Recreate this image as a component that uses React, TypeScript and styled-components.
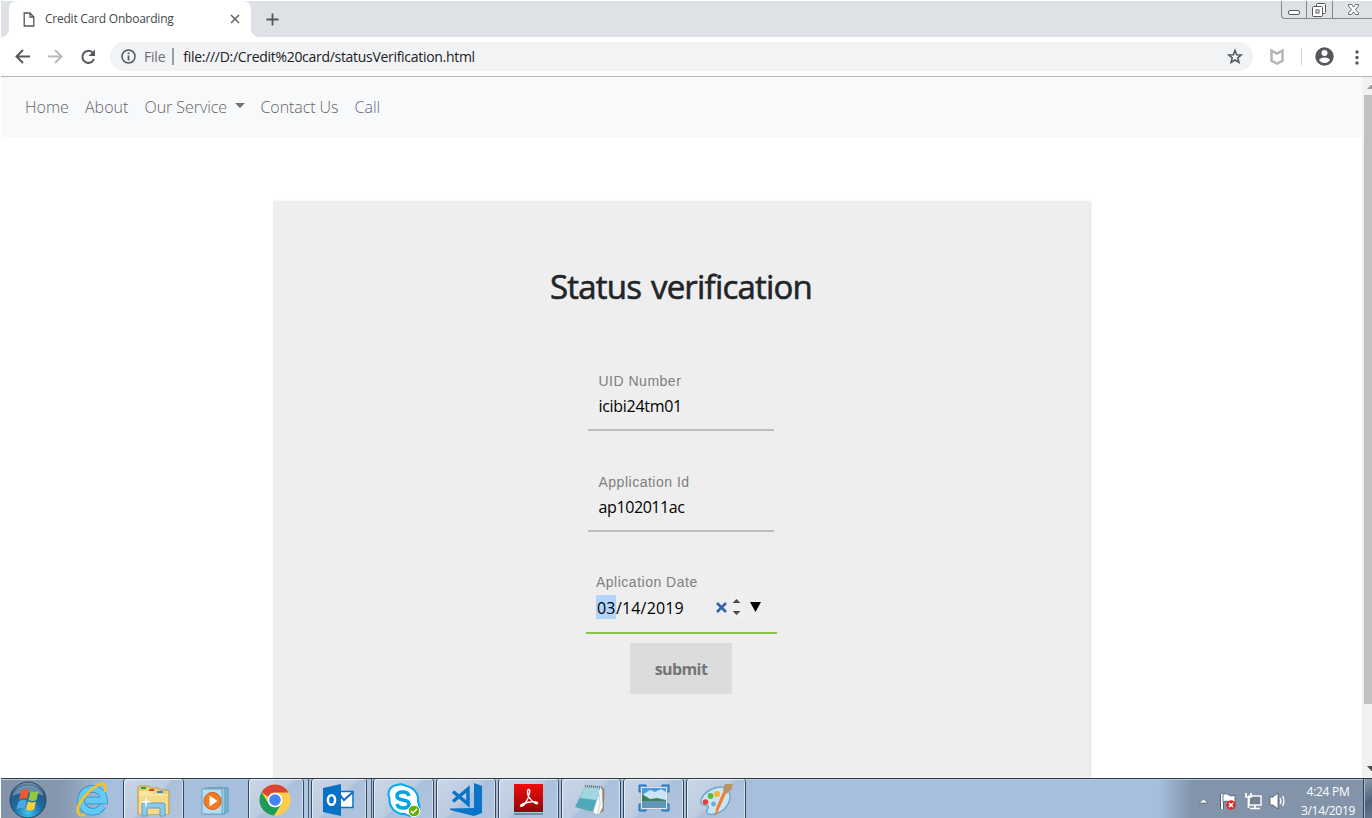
import React from 'react';
import styled, { createGlobalStyle, css } from 'styled-components';

const Global = createGlobalStyle`
  *, *::before, *::after { box-sizing: border-box; }
  html, body { margin: 0; background: #fff; overflow: hidden; }
  body { font-family: 'Open Sans', 'Noto Sans', sans-serif; }
  svg { display: block; flex: none; }
`;

const Screen = styled.div`
  width: 1372px;
  height: 818px;
  padding: 1px 0 0 1px;
  display: flex;
  flex-direction: column;
  overflow: hidden;
`;

/* ---------- browser frame ---------- */
const TabStrip = styled.div`
  height: 36px;
  flex: none;
  display: flex;
  align-items: flex-start;
  background: #dee1e6;
`;
const TabEdge = styled.div<{ $side: 'left' | 'right' }>`
  width: 8px;
  height: 36px;
  background: #fff;
  &::after {
    content: '';
    display: block;
    height: 36px;
    background: #dee1e6;
    border-radius: ${p => (p.$side === 'left' ? '0 0 8px 0' : '0 0 0 8px')};
  }
`;
const TabBack = styled.div`
  background: #dee1e6;
`;
const Tab = styled.div`
  width: 242px;
  height: 36px;
  padding: 0 10px 0 14px;
  display: flex;
  align-items: center;
  background: #fff;
  border-radius: 8px 8px 0 0;
`;
const TabTitle = styled.span`
  flex: 1;
  margin-left: 10px;
  font-size: 12px;
  line-height: 18px;
  letter-spacing: -0.23px;
  color: #45494d;
  white-space: nowrap;
`;
const NewTab = styled.div`
  margin: 12px 0 0 7px;
`;
const WindowControls = styled.div`
  margin-left: auto;
  display: flex;
  height: 18px;
  border: 1px solid #85878b;
  border-width: 0 0 1px 1px;
  border-radius: 0 0 0 4px;
`;
const WindowControl = styled.div<{ $w: number }>`
  width: ${p => p.$w}px;
  display: flex;
  justify-content: center;
  border-right: 1px solid #85878b;
  &:last-child { border-right: 0; }
`;
const Toolbar = styled.div`
  height: 40px;
  flex: none;
  display: flex;
  align-items: center;
  padding-left: 12px;
  background: #fff;
  border-bottom: 1px solid #b4b5b7;
`;
const NavIcons = styled.div`
  display: flex;
  gap: 13px;
  width: 97px;
`;
const Omnibox = styled.div`
  width: 1143px;
  height: 29px;
  border-radius: 15px;
  background: #f1f3f4;
  display: flex;
  align-items: center;
  padding: 0 9px 0 10px;
  font-size: 14px;
`;
const Scheme = styled.span`
  margin-left: 7px;
  padding-right: 7px;
  line-height: 17px;
  border-right: 2px solid #9b9fa3;
  color: #6b6f74;
  letter-spacing: -0.2px;
`;
const Url = styled.span`
  flex: 1;
  margin-left: 9px;
  color: #202124;
  letter-spacing: -0.3px;
`;
const ToolbarEnd = styled.div`
  display: flex;
  align-items: center;
  margin-left: 15px;
`;
const ToolbarDivider = styled.div`
  width: 1px;
  height: 17px;
  margin: 0 12px 0 15px;
  background: #cfd1d4;
`;

/* ---------- page ---------- */
const Viewport = styled.div`
  height: 701px;
  flex: none;
  display: flex;
  overflow: hidden;
`;
const Page = styled.div`
  width: 1361px;
  flex: none;
  display: flex;
  flex-direction: column;
  align-items: center;
`;
const NavBar = styled.nav`
  width: 100%;
  height: 60px;
  flex: none;
  display: flex;
  align-items: center;
  padding: 0 0 1px 24px;
  background: #f8f9fa;
`;
const NavLink = styled.a<{ $w: number; $spacing: number; $tint?: string }>`
  width: ${p => p.$w}px;
  display: flex;
  align-items: center;
  font-size: 16px;
  font-weight: 300;
  letter-spacing: ${p => p.$spacing}px;
  color: ${p => p.$tint ?? '#636567'};
  white-space: nowrap;
`;
const Caret = styled.i`
  margin: 0 0 2px 8px;
  border: 5px solid transparent;
  border-top-color: #6f7173;
  border-bottom: 0;
`;
const Card = styled.main`
  width: 817px;
  height: 700px;
  flex: none;
  margin-top: 64px;
  padding: 59px 1px 0 0;
  background: #eee;
  border-radius: 2px;
  box-shadow: 1px 0 2px rgba(0, 0, 0, 0.12);
  display: flex;
  flex-direction: column;
  align-items: center;
`;
const Heading = styled.h1`
  margin: 0;
  height: 110px;
  font-size: 33px;
  line-height: 54px;
  font-weight: 400;
  letter-spacing: -0.8px;
  word-spacing: 2px;
  color: #212529;
  -webkit-text-stroke: 0.6px #212529;
  white-space: nowrap;
`;
const Field = styled.label<{ $gap: number; $active?: boolean }>`
  width: ${p => (p.$active ? 191 : 186)}px;
  height: ${p => (p.$active ? 63 : 61)}px;
  margin: 0 0 ${p => p.$gap}px ${p => (p.$active ? 1 : 0)}px;
  padding-left: ${p => (p.$active ? 10 : 10.5)}px;
  display: flex;
  flex-direction: column;
  border-bottom: 2px solid ${p => (p.$active ? '#8bc34a' : '#bdbdbd')};
`;
const FieldLabel = styled.span`
  height: 22px;
  font: 14px/22px 'Liberation Sans', sans-serif;
  letter-spacing: 0.5px;
  color: #7f7f7f;
`;
const FieldValue = styled.span<{ $spacing: number }>`
  height: 28px;
  display: flex;
  align-items: center;
  font-size: 16px;
  line-height: 24px;
  letter-spacing: ${p => p.$spacing}px;
  color: #000;
`;
const Selected = styled.span`
  height: 24px;
  width: 20px;
  padding-left: 1px;
  line-height: 26px;
  background: #b3d4fd;
`;
const DateRest = styled.span`
  height: 24px;
  line-height: 26px;
`;
const DateTools = styled.span`
  margin-left: auto;
  padding-right: 16px;
  display: flex;
  align-items: center;
`;
const Spinner = styled.span`
  width: 15px;
  height: 24px;
  margin: 0 6px 0 1px;
  display: flex;
  align-items: center;
  justify-content: center;
  background: #f0f0f0;
`;
const Submit = styled.button`
  width: 102px;
  height: 51px;
  padding: 0;
  border: 0;
  background: #dcdcdc;
  color: #757575;
  font: 700 16px 'Open Sans', sans-serif;
  letter-spacing: -0.6px;
`;
const ScrollRail = styled.div`
  width: 10px;
  padding: 4px 0;
  display: flex;
  flex-direction: column;
  justify-content: space-between;
  background: #f1f1f1;
`;
const ScrollThumb = styled.div`
  height: 609px;
  margin: 6px 0 auto 2px;
  background: #c1c1c1;
`;

/* ---------- taskbar ---------- */
const TaskBar = styled.div`
  height: 40px;
  flex: none;
  display: flex;
  border-top: 1px solid #2e3a48;
  box-shadow: inset 0 1px 0 #b9cbe0;
  background: linear-gradient(90deg, #8293aa 0, #8797ae 60px, #a5bfdc 108px, #a5bfdc 1158px, #8293aa 1192px, #8293aa 100%);
`;
const Task = styled.div<{ $w: number; $gap?: number; $open?: boolean }>`
  width: ${p => p.$w}px;
  height: 39px;
  flex: none;
  margin-right: ${p => p.$gap ?? 0}px;
  overflow: hidden;
  ${p => p.$open && css`
    border: 1px solid #38475a;
    border-width: 0 1px;
    border-radius: 3px 3px 0 0;
    box-shadow: inset 1px 1px 0 #e4edf7, inset -1px 0 0 #d3dfed;
    background: linear-gradient(135deg, #cbd7e7 0, #bccbe0 48%, #abc0dc 52%, #b1c5df 100%);
  `}
`;
const StackEdge = styled.div<{ $gap: number }>`
  width: 5px;
  height: 39px;
  margin-right: ${p => p.$gap}px;
  background: #b0c4dd;
  border-right: 1px solid #4b5c71;
`;
const Tray = styled.div`
  margin-left: auto;
  display: flex;
  align-items: center;
`;
const Clock = styled.div`
  width: 62px;
  margin: 4px 4px 0 10px;
  font-size: 12px;
  line-height: 19px;
  letter-spacing: -0.3px;
  text-align: center;
  color: #fff;
  white-space: nowrap;
`;
const PeekButton = styled.div`
  width: 9px;
  height: 39px;
  border-left: 1px solid #33414f;
  box-shadow: inset 1px 0 0 #a9b9cb;
  background: linear-gradient(150deg, #8e9daf, #4d6078 60%, #64778e);
`;

const Glyph = ({ children }: { children: React.ReactNode }) => (
  <svg width="60" height="39" viewBox="0 0 60 39">{children}</svg>
);

const StartIcon = () => (
  <Glyph>
    <defs>
      <radialGradient id="orb" cx="50%" cy="85%" r="85%">
        <stop offset="0" stopColor="#41c5ef" /><stop offset=".45" stopColor="#1d6ca5" />
        <stop offset=".8" stopColor="#28567f" /><stop offset="1" stopColor="#819db5" />
      </radialGradient>
    </defs>
    <circle cx="27" cy="21" r="18" fill="url(#orb)" stroke="#294862" />
    <path d="M11 17a17 16 0 0 1 32 0q-15-7-32 0z" fill="#a3bfd3" opacity=".5" />
    <path d="M20 12q4-3 8-1l-2 9q-4-2-8 1z" fill="#ee5a28" />
    <path d="M29.500 12q4 2 8 0l-2 9q-4 2-8 0z" fill="#91c83e" />
    <path d="M17.500 22.500q4-3 8-1l-2 8q-4-2-8 1z" fill="#4fa8df" />
    <path d="M27 22.500q4 2 8 0l-2 8q-4 2-8 0z" fill="#ffce36" />
  </Glyph>
);
const ExplorerEIcon = () => (
  <Glyph>
    <path d="M41.500 27A11.500 11.500 0 1 1 43 21.500H25" fill="none" stroke="#258bc7" strokeWidth="7.500" />
    <path d="M41.500 27A11.500 11.500 0 1 1 43 21.500H25" fill="none" stroke="#62caf3" strokeWidth="6" />
    <path d="M23 36c-9 2-8-9 1-19C32 7 44 1 44.500 8l-.5 4" fill="none" stroke="#f4c22b" strokeWidth="2.700" strokeLinecap="round" />
  </Glyph>
);
const FolderIcon = () => (
  <Glyph>
    <path d="M14 9q0-2 2-2h9l2 2h7l2 2h7q2 0 2 2v22H14z" fill="#eccf77" stroke="#c09a3e" />
    <path d="M15 12h13l2 3h14v20H15z" fill="#f9e6a2" /><path d="M15 17h29v18H15z" fill="#f4da8b" />
    <path d="M17 8h5v2h-5z" fill="#16a83a" /><path d="M25 10h5v2h-5z" fill="#d9412b" /><path d="M33 12h6v2h-6z" fill="#298ed9" />
    <path d="M18 37V26q0-2 2-2h19q2 0 2 2v11h-5v-8H23v8z" fill="#8bcbe9" stroke="#5e9fc2" />
    <path d="M22 17l1 5 5 1-5 1-1 5-1-5-5-1 5-1z" fill="#fff" />
  </Glyph>
);
const MediaIcon = () => (
  <Glyph>
    <path d="M24 9h20v24H24z" fill="#7fb7d8" stroke="#5795bb" /><path d="M21 9h20v26H21z" fill="#9ccce4" stroke="#5795bb" /><path d="M18 10h20v25H18z" fill="#b7dcec" stroke="#68a5c5" />
    <circle cx="28.500" cy="22" r="8.500" fill="#f47b20" stroke="#da5910" /><path d="M25.500 16.500v11l8-5.500z" fill="#fff" />
  </Glyph>
);
const ChromeIcon = () => (
  <Glyph>
    <circle cx="26" cy="21" r="15.500" fill="#fbcf4b" />
    <path d="M12.600 13.200A15.500 15.500 0 0 1 39.500 13.500H26a7.500 7.500 0 0 0-6.800 4.300z" fill="#db4437" />
    <path d="M12.600 13.200A15.500 15.500 0 0 0 25 36.500l7-11a7.500 7.500 0 0 1-12.500-1z" fill="#1c9c5a" />
    <circle cx="26" cy="21" r="7.300" fill="#fff" /><circle cx="26" cy="21" r="5.800" fill="#4285f4" />
  </Glyph>
);
const OutlookIcon = () => (
  <Glyph>
    <path d="M26 12.500h15v16H26z" fill="#fff" stroke="#0b6fc5" strokeWidth="1.500" />
    <path d="M27 15l5 6 9-8" fill="none" stroke="#0b6fc5" strokeWidth="2" />
    <path d="M11 9l18-4v32l-18-4z" fill="#0771c7" /><ellipse cx="19.500" cy="21" rx="3.600" ry="4.800" fill="none" stroke="#fff" strokeWidth="2.500" />
  </Glyph>
);
const SkypeIcon = () => (
  <Glyph>
    <path d="M23 6a9 9 0 0 1 9 1 14 14 0 0 1 12 16 9 9 0 0 1-13 12A14.500 14.500 0 0 1 15.500 19 9 9 0 0 1 23 6z" fill="#fff" stroke="#00a9ed" strokeWidth="2" />
    <path d="M35 17q-1-4-6-4-6 0-6 4 0 3 6 4t6 4q0 4-6 4-5 0-6-4" fill="none" stroke="#00a4e8" strokeWidth="3.600" />
    <circle cx="40" cy="32" r="5.800" fill="#6cae00" stroke="#fff" /><path d="M37 32l2 2 4-4" fill="none" stroke="#fff" strokeWidth="1.500" />
  </Glyph>
);
const CodeIcon = () => (
  <Glyph>
    <path d="M37 4l8 3v27l-8 3-24-6v-1.500l24-.5z" fill="#0875c9" />
    <path d="M16 12.500L31 25V10L16 22.500" fill="none" stroke="#0875c9" strokeWidth="3.500" />
  </Glyph>
);
const AcrobatIcon = () => (
  <Glyph>
    <defs><linearGradient id="pdf" x1="0" x2="0" y1="0" y2="1"><stop offset="0" stopColor="#f30b0b" /><stop offset="1" stopColor="#8e0508" /></linearGradient></defs>
    <path d="M15 34h29v2H15z" fill="#53657d" opacity=".6" /><path d="M15 5h29v28H15z" fill="url(#pdf)" />
    <path d="M21.500 27c0-3 16-6 17-3 0 3-10-4-10-11 0-4 3-3 2 1-1 6-6 15-9 13z" fill="none" stroke="#fff" strokeWidth="1.400" />
  </Glyph>
);
const NotepadIcon = () => (
  <Glyph>
    <path d="M37 9l5 1-1 22-6 3z" fill="#b49a60" stroke="#8e7950" />
    <path d="M24 7l16 1 1 20-4 8-9-3z" fill="#f5f8f7" stroke="#91a0a3" strokeWidth=".7" />
    <path d="M23 8l15 1-7 24-18-5z" fill="#4fa9ba" />
    <path d="M23 8l15 1-4 12-16-2z" fill="#a0d8df" />
    <path d="M31 33l6-18 1 10-3 11z" fill="#fff" stroke="#a5b3b8" strokeWidth=".6" />
    <path d="M23 7l17 1.500" stroke="#68777c" strokeWidth="2.500" strokeDasharray="1 1" />
  </Glyph>
);
const PhotoIcon = () => (
  <Glyph>
    <path d="M15 6h7v7h-7zM38 6h7v7h-7zM15 25h7v7h-7zM38 25h7v7h-7z" fill="#4b9fe0" stroke="#2366aa" />
    <path d="M17 8h26v22H17z" fill="#fff" stroke="#8b9dae" strokeWidth=".5" />
    <path d="M18 9h24v12H18z" fill="#4a9bdf" /><path d="M18 16l8-5 5 2 6-3 5 3v8H18z" fill="#cce5f7" />
    <path d="M18 15l8 5 7-1 9 2v2H18z" fill="#3f8059" /><path d="M18 22h24v7H18z" fill="#5f96ba" />
  </Glyph>
);
const PaintIcon = () => (
  <Glyph>
    <path d="M14 22c1-8 12-14 20-14 9 0 11 10 7 17-4 8-16 13-21 9-2-3 3-5 1-7-3-2-8 0-7-5z" fill="#cce5f4" stroke="#6ea9cd" strokeWidth="1.500" />
    <circle cx="18.500" cy="23" r="2.800" fill="#e43e32" /><circle cx="23.500" cy="17" r="2.900" fill="#59b936" /><circle cx="30" cy="15" r="3" fill="#f8b62d" /><circle cx="26.500" cy="25" r="2.400" fill="#77a7d4" />
    <path d="M40 12l-8 18-4 8 1-9 8-18z" fill="#f08029" /><path d="M36 10l2-5 8 0-2 6-5 4z" fill="#bd9262" />
  </Glyph>
);

const Browser = () => (
  <>
    <TabStrip>
      <TabEdge $side="left" />
      <TabBack>
        <Tab>
          <svg width="12" height="15" viewBox="0 0 12 15" fill="none" stroke="#54585c" strokeWidth="1.300"><path d="M1.200 1h5.800l3.800 4v9H1.200zM7 1v4h3.800" /></svg>
          <TabTitle>Credit Card Onboarding</TabTitle>
          <svg width="12" height="12" viewBox="0 0 12 12" stroke="#5f6368" strokeWidth="1.500"><path d="M2 2l8 8M10 2l-8 8" /></svg>
        </Tab>
      </TabBack>
      <TabEdge $side="right" />
      <NewTab><svg width="13" height="13" viewBox="0 0 13 13" stroke="#54585d" strokeWidth="1.800"><path d="M6.500 .5v12M.5 6.500h12" /></svg></NewTab>
      <WindowControls>
        <WindowControl $w={25}>
          <svg width="24" height="17" viewBox="0 0 24 17"><rect x="6.500" y="9.500" width="11" height="4" rx="1.500" fill="#fff" stroke="#55585c" /></svg>
        </WindowControl>
        <WindowControl $w={26}>
          <svg width="25" height="17" viewBox="0 0 25 17" fill="#fff" stroke="#55585c"><rect x="9.500" y="2.500" width="9" height="10" rx="1" /><rect x="5.500" y="5.500" width="10" height="10" rx="1" /><rect x="9" y="9" width="3" height="3" /></svg>
        </WindowControl>
        <WindowControl $w={39}>
          <svg width="39" height="17" viewBox="0 0 39 17"><path d="M15.500 3.500h3l2 2.500 2-2.500h3v1.500l-3 3.500 3 3.500v1.500h-3l-2-2.500-2 2.500h-3v-1.500l3-3.500-3-3.500z" fill="#fff" stroke="#6a6d71" /></svg>
        </WindowControl>
      </WindowControls>
    </TabStrip>
    <Toolbar>
      <NavIcons>
        <svg width="20" height="20" viewBox="0 0 20 20" fill="none" stroke="#54585d" strokeWidth="2"><path d="M17 9.500H4M10 3L3.500 9.500 10 16" /></svg>
        <svg width="20" height="20" viewBox="0 0 20 20" fill="none" stroke="#b9bbbe" strokeWidth="2"><path d="M2 9.500h13M9 3l6.500 6.500L9 16" /></svg>
        <svg width="20" height="20" viewBox="0 0 20 20"><path d="M15 12A6 6 0 1 1 13.500 5.500" fill="none" stroke="#54585d" strokeWidth="2" /><path d="M16 2.500v6.500H9.500z" fill="#54585d" /></svg>
      </NavIcons>
      <Omnibox>
        <svg width="17" height="17" viewBox="0 0 17 17" fill="none" stroke="#54585d"><circle cx="8.500" cy="8.500" r="6.500" strokeWidth="1.500" /><path d="M8.500 7.500v5M8.500 4.500v1.700" strokeWidth="1.700" /></svg>
        <Scheme>File</Scheme>
        <Url>file:///D:/Credit%20card/statusVerification.html</Url>
        <svg width="17" height="17" viewBox="0 0 17 17" fill="none" stroke="#54585d" strokeWidth="1.600"><path d="M8 2.500l1.700 4.200 4.500.3-3.400 2.900 1.100 4.500L8 12l-3.900 2.400 1.100-4.500L1.800 7l4.500-.3z" /></svg>
      </Omnibox>
      <ToolbarEnd>
        <svg width="18" height="18" viewBox="0 0 18 18"><path d="M3.500 2.500L9 5.500l5.500-3v10.300L9 15.500l-5.500-2.700z" fill="none" stroke="#b5b5b5" strokeWidth="2.500" /></svg>
        <ToolbarDivider />
        <svg width="20" height="20" viewBox="0 0 20 20"><circle cx="10.500" cy="9.500" r="9.200" fill="#54585d" /><circle cx="10.500" cy="6" r="3" fill="#fff" /><path d="M5 13q1.500-2.500 5.500-2.500t5.500 2.500q-2 3-5.500 3t-5.500-3z" fill="#fff" /></svg>
        <svg width="26" height="20" viewBox="0 0 26 20" fill="#54585d"><circle cx="23" cy="5" r="1.700" /><circle cx="23" cy="10.500" r="1.700" /><circle cx="23" cy="16" r="1.700" /></svg>
      </ToolbarEnd>
    </Toolbar>
  </>
);

export default function App() {
  return (
    <Screen>
      <Global />
      <Browser />
      <Viewport>
        <Page>
          <NavBar>
            <NavLink $w={60} $spacing={0}>Home</NavLink>
            <NavLink $w={59.5} $spacing={0}>About</NavLink>
            <NavLink $w={116} $spacing={-0.05}>Our Service<Caret /></NavLink>
            <NavLink $w={94} $spacing={-0.08}>Contact Us</NavLink>
            <NavLink $w={40} $spacing={0} $tint="#66668f">Call</NavLink>
          </NavBar>
          <Card>
            <Heading>Status verification</Heading>
            <Field $gap={40}><FieldLabel>UID Number</FieldLabel><FieldValue $spacing={-0.3}>icibi24tm01</FieldValue></Field>
            <Field $gap={39}><FieldLabel>Application Id</FieldLabel><FieldValue $spacing={-0.4}>ap102011ac</FieldValue></Field>
            <Field $gap={9} $active>
              <FieldLabel>Aplication Date</FieldLabel>
              <FieldValue $spacing={0.15}>
                <Selected>03</Selected><DateRest>/14/2019</DateRest>
                <DateTools>
                  <svg width="13" height="14" viewBox="0 0 13 14"><path d="M2 3l9 9M11 3l-9 9" stroke="#3763ad" strokeWidth="2.800" /></svg>
                  <Spinner><svg width="9" height="18" viewBox="0 0 9 18" fill="#4c4c4c"><path d="M.5 5L4.500 1l4 4zM.5 13l4 4 4-4z" /></svg></Spinner>
                  <svg width="11" height="12" viewBox="0 0 11 12"><path d="M0 1h11L5.500 11z" /></svg>
                </DateTools>
              </FieldValue>
            </Field>
            <Submit>submit</Submit>
          </Card>
        </Page>
        <ScrollRail>
          <svg width="10" height="8" viewBox="0 0 10 8"><path d="M5 8l4-4h2v4z" fill="#9b9b9b" /></svg>
          <ScrollThumb />
          <svg width="10" height="8" viewBox="0 0 10 8"><path d="M5 0h6v5H9.500z" fill="#4c4c4c" /></svg>
        </ScrollRail>
      </Viewport>
      <TaskBar>
        <Task $w={60}><StartIcon /></Task>
        <Task $w={62}><ExplorerEIcon /></Task>
        <Task $w={61} $open><FolderIcon /></Task>
        <Task $w={64}><MediaIcon /></Task>
        <Task $w={56} $open><ChromeIcon /></Task><StackEdge $gap={2} />
        <Task $w={56} $open><OutlookIcon /></Task><StackEdge $gap={1} />
        <Task $w={61} $gap={2} $open><SkypeIcon /></Task>
        <Task $w={60} $gap={2} $open><CodeIcon /></Task>
        <Task $w={61} $gap={2} $open><AcrobatIcon /></Task>
        <Task $w={60} $gap={2} $open><NotepadIcon /></Task>
        <Task $w={61} $gap={2} $open><PhotoIcon /></Task>
        <Task $w={60} $open><PaintIcon /></Task>
        <Tray>
          <svg width="90" height="39" viewBox="0 0 90 39">
            <path d="M2 24l4.500-4 4.500 4z" fill="#fff" stroke="#56677b" strokeWidth=".7" />
            <path d="M25 15v15" stroke="#46566a" strokeWidth="3.500" /><path d="M25 15v15" stroke="#fff" strokeWidth="2" /><path d="M26 15q4-1 6 1t6 0v8q-4 1-6-1t-6 0z" fill="#fff" stroke="#46566a" strokeWidth=".8" /><circle cx="34" cy="26" r="4.700" fill="#dc2924" /><path d="M32 24l4 4M36 24l-4 4" stroke="#fff" strokeWidth="1.600" />
            <rect x="52" y="17" width="12" height="9" fill="#718297" stroke="#fff" strokeWidth="1.400" /><path d="M58 26v3M53 29.500h10M49 14v4h5v-4M51.500 18v11" fill="none" stroke="#fff" strokeWidth="1.700" />
            <path d="M73 18h3l5-4v16l-5-4h-3z" fill="#fff" stroke="#46566a" strokeWidth=".8" /><path d="M83 19q2 3 0 6M85.500 17q3 5 0 10" fill="none" stroke="#fff" strokeWidth="1.300" />
          </svg>
          <Clock>4:24 PM<br />3/14/2019</Clock>
          <PeekButton />
        </Tray>
      </TaskBar>
    </Screen>
  );
}
